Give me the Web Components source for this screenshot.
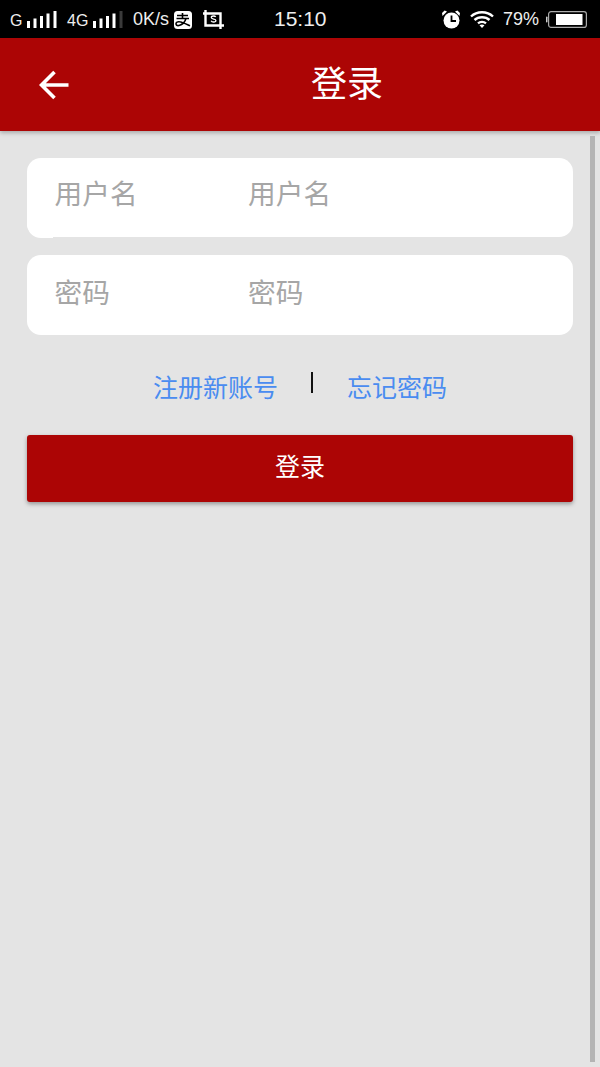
<!DOCTYPE html>
<html lang="zh">
<head>
<meta charset="utf-8">
<title>登录</title>
<style>
  html, body { margin: 0; padding: 0; }
  body { width: 600px; height: 1067px; overflow: hidden; background: #e4e4e4; font-family: "Liberation Sans", "Noto Sans CJK SC", sans-serif; }
</style>
</head>
<body>
<login-page>
  <status-bar slot="status"></status-bar>
  <app-header slot="header" title="登录"></app-header>
  <text-field label="用户名" placeholder="用户名" notched></text-field>
  <text-field label="密码" placeholder="密码"></text-field>
  <login-links></login-links>
  <primary-button>登录</primary-button>
</login-page>

<script>
class StatusBar extends HTMLElement {
  constructor() {
    super();
    this.attachShadow({ mode: 'open' });
  }

  bars(dimLast) {
    return `
      <svg class="bars" width="30" height="18" viewBox="0 0 30 18" fill="#fff">
        <rect x="0" y="11" width="3" height="7"/>
        <rect x="6.500" y="8.500" width="3" height="9.500"/>
        <rect x="13" y="6" width="3" height="12"/>
        <rect x="19.500" y="3.500" width="3" height="14.500"/>
        <rect x="26.500" y="1" width="3" height="17" fill="${dimLast ? '#3a3a3a' : '#fff'}"/>
      </svg>`;
  }

  connectedCallback() {
    this.shadowRoot.innerHTML = `
      <style>
        :host { display: block; height: 38px; background: #000; color: #eee; font: 18px "Liberation Sans", sans-serif; }
        .row { height: 38px; display: flex; align-items: center; padding: 0 13px 0 10px; box-sizing: border-box; }
        .left, .right { display: flex; align-items: center; }
        .left { width: 264px; }
        .time { width: 52px; font-size: 21px; text-align: center; }
        .right { margin-left: auto; }
        svg { display: block; flex: none; }
        .g, .g2 { font-size: 16px; padding-top: 4px; }
        .g { width: 17px; }
        .g2 { width: 26px; margin-left: 10px; }
        .speed { margin-left: 10px; width: 41px; }
        .pay { margin-top: 1px; }
        .shot { margin-left: 10px; }
        .pct { margin: 0 7px 0 9px; }
        .wifi { margin-left: 9px; }
      </style>
      <div class="row">
        <div class="left">
          <span class="g">G</span>
          ${this.bars(false)}
          <span class="g2">4G</span>
          ${this.bars(true)}
          <span class="speed">0K/s</span>
          <svg class="pay" width="18" height="18" viewBox="0 0 18 18">
            <rect width="18" height="18" rx="3.500" fill="#fff"/>
            <path d="M3 4.500h11M8.500 2v5M2.500 7.500h12.500M12 7.500c-1 3.500-3.500 6-7 7-2 .5-3-.5-3-1.700 0-1.500 1.500-2.300 3.500-2 2.500.3 6 2 10.500 4" fill="none" stroke="#000" stroke-width="1.600"/>
          </svg>
          <svg class="shot" width="22" height="19" viewBox="0 0 22 19">
            <path d="M3.500 0v15.500H22M1 3.500h17.500V19" fill="none" stroke="#fff" stroke-width="2.400"/>
            <path d="M13.700 7c-.4-.7-1.200-1-2.200-1-1.300 0-2.200.6-2.200 1.500 0 2.200 4.600.9 4.600 3 0 .9-.9 1.500-2.300 1.500-1.200 0-2.100-.4-2.500-1.200" fill="none" stroke="#fff" stroke-width="1.300"/>
          </svg>
        </div>
        <span class="time">15:10</span>
        <div class="right">
          <svg width="20" height="19" viewBox="0 0 20 19">
            <path d="M1.500 6 6 1.500 3.600 .6 1 3zM18.500 6 14 1.500 16.400 .6 19 3z" fill="#fff"/>
            <circle cx="10.500" cy="10.500" r="8" fill="#fff"/>
            <path d="M10.500 5.500v5.500h4.500" fill="none" stroke="#000" stroke-width="1.800"/>
          </svg>
          <svg class="wifi" width="24" height="18" viewBox="0 0 24 18">
            <g fill="none" stroke="#fff" stroke-width="2.400">
              <path d="M1 6.500c6-5.700 16-5.700 22 0"/>
              <path d="M4.500 10c4-3.700 11-3.700 15 0"/>
              <path d="M8 13.300c2.200-1.900 5.800-1.900 8 0"/>
            </g>
            <path d="M12 18l-2.500-2.700c1.500-1 3.500-1 5 0z" fill="#fff"/>
          </svg>
          <span class="pct">79%</span>
          <svg width="41" height="17" viewBox="0 0 41 17">
            <rect x="0" y="5.500" width="1.500" height="6" rx=".7" fill="#ccc"/>
            <rect x="2.600" y=".6" width="37.800" height="15.800" rx="2.500" fill="none" stroke="#aaa" stroke-width="1.200"/>
            <rect x="10" y="3" width="26.500" height="11" fill="#fff"/>
          </svg>
        </div>
      </div>
    `;
  }
}

class AppHeader extends HTMLElement {
  constructor() {
    super();
    this.attachShadow({ mode: 'open' });
  }

  connectedCallback() {
    this.shadowRoot.innerHTML = `
      <style>
        :host { display: block; height: 93px; background: #ac0505; box-shadow: 0 2px 4px rgba(0, 0, 0, 0.25); position: relative; }
        .bar { height: 93px; display: flex; align-items: center; color: #fff; padding-left: 39px; box-sizing: border-box; }
        svg { display: block; flex: none; }
        h1 { margin: 0 0 0 242px; font: 400 36px/1 "Liberation Sans", "Noto Sans CJK SC", sans-serif; }
      </style>
      <div class="bar">
        <svg width="30" height="30" viewBox="0 0 30 30">
          <path d="M29.500 15H3M15.500 2 2.500 15l13 13" fill="none" stroke="#fff" stroke-width="3.600"/>
        </svg>
        <h1>${this.getAttribute('title')}</h1>
      </div>
    `;
  }
}

class TextField extends HTMLElement {
  constructor() {
    super();
    this.attachShadow({ mode: 'open' });
  }

  connectedCallback() {
    this.shadowRoot.innerHTML = `
      <style>
        :host { display: block; position: relative; height: 79px; background: #fff; border-radius: 14px; color: #a6a6a6; font: 27.700px "Liberation Sans", "Noto Sans CJK SC", sans-serif; }
        :host([notched])::after { content: ""; position: absolute; left: 0; bottom: -1px; width: 26px; height: 20px; background: #fff; border-radius: 0 0 0 14px; }
        .row { height: 72px; display: flex; align-items: center; padding-left: 27.500px; }
        :host([notched]) .row { height: 68px; }
        .label { width: 193.500px; }
      </style>
      <div class="row">
        <span class="label">${this.getAttribute('label')}</span>
        <span>${this.getAttribute('placeholder')}</span>
      </div>
    `;
  }
}

class LoginLinks extends HTMLElement {
  constructor() {
    super();
    this.attachShadow({ mode: 'open' });
  }

  connectedCallback() {
    this.shadowRoot.innerHTML = `
      <style>
        :host { display: block; font: 25px "Liberation Sans", "Noto Sans CJK SC", sans-serif; color: #4a8cf0; }
        .row { display: flex; justify-content: center; align-items: center; height: 30px; }
        i { display: block; width: 2px; height: 21px; background: #111; margin: -8px 34px 0 33px; }
      </style>
      <div class="row">
        <span>注册新账号</span><i></i><span>忘记密码</span>
      </div>
    `;
  }
}

class PrimaryButton extends HTMLElement {
  constructor() {
    super();
    this.attachShadow({ mode: 'open' });
  }

  connectedCallback() {
    this.shadowRoot.innerHTML = `
      <style>
        :host { display: flex; height: 59px; padding-bottom: 8px; align-items: center; justify-content: center; background: #ac0505; color: #fff; border-radius: 3px; box-shadow: 0 2px 4px rgba(0, 0, 0, 0.35); font: 25px "Liberation Sans", "Noto Sans CJK SC", sans-serif; }
      </style>
      <slot></slot>
    `;
  }
}

class LoginPage extends HTMLElement {
  constructor() {
    super();
    this.attachShadow({ mode: 'open' });
  }

  connectedCallback() {
    this.shadowRoot.innerHTML = `
      <style>
        :host { display: block; position: relative; height: 1067px; background: #e4e4e4; }
        .form { display: flex; flex-direction: column; padding: 27px 27px 0; }
        ::slotted(text-field) { margin-bottom: 18px; }
        ::slotted(text-field:nth-of-type(2)) { height: 80px; margin-bottom: 36px; }
        ::slotted(login-links) { margin-bottom: 34px; }
        .scroll { position: absolute; left: 590px; top: 136px; width: 5px; height: 926px; background: #b4b4b4; }
      </style>
      <slot name="status"></slot>
      <slot name="header"></slot>
      <div class="form"><slot></slot></div>
      <div class="scroll"></div>
    `;
  }
}

customElements.define('status-bar', StatusBar);
customElements.define('app-header', AppHeader);
customElements.define('text-field', TextField);
customElements.define('login-links', LoginLinks);
customElements.define('primary-button', PrimaryButton);
customElements.define('login-page', LoginPage);
</script>
</body>
</html>
